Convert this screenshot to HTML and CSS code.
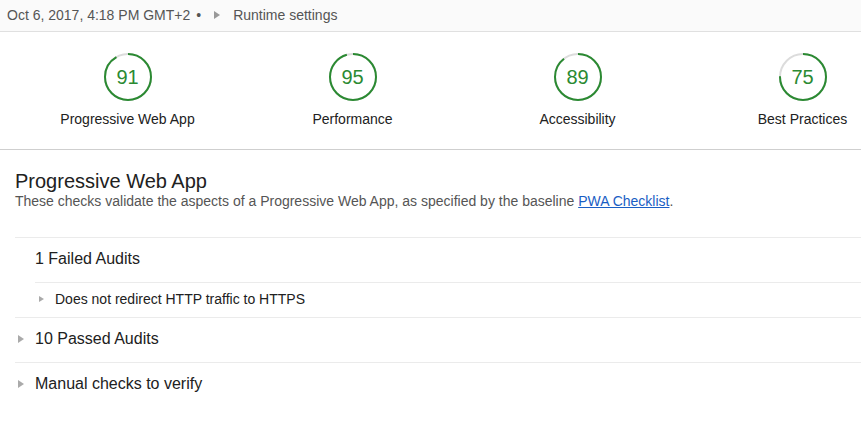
FILE: index.html
```html
<!DOCTYPE html>
<html>
<head>
<meta charset="utf-8">
<link rel="stylesheet" href="styles.css">
</head>
<body>
<div class="topbar">
  <span class="meta">Oct 6, 2017, 4:18 PM GMT+2</span>
  <span class="bullet">•</span>
  <span class="tri small"></span>
  <span class="runtime">Runtime settings</span>
</div>
<div class="scores">
  <div class="gauge">
    <div class="ring">
      <svg width="50" height="50" viewBox="0 0 50 50"><circle cx="25" cy="25" r="23" class="bg"/><circle cx="25" cy="25" r="23" class="fg" style="stroke-dasharray: 131.5 144.5"/></svg>
      <span class="num">91</span>
    </div>
    <div class="label">Progressive Web App</div>
  </div>
  <div class="gauge">
    <div class="ring">
      <svg width="50" height="50" viewBox="0 0 50 50"><circle cx="25" cy="25" r="23" class="bg"/><circle cx="25" cy="25" r="23" class="fg" style="stroke-dasharray: 137.3 144.5"/></svg>
      <span class="num">95</span>
    </div>
    <div class="label">Performance</div>
  </div>
  <div class="gauge">
    <div class="ring">
      <svg width="50" height="50" viewBox="0 0 50 50"><circle cx="25" cy="25" r="23" class="bg"/><circle cx="25" cy="25" r="23" class="fg" style="stroke-dasharray: 128.6 144.5"/></svg>
      <span class="num">89</span>
    </div>
    <div class="label">Accessibility</div>
  </div>
  <div class="gauge">
    <div class="ring">
      <svg width="50" height="50" viewBox="0 0 50 50"><circle cx="25" cy="25" r="23" class="bg"/><circle cx="25" cy="25" r="23" class="fg" style="stroke-dasharray: 108.4 144.5"/></svg>
      <span class="num">75</span>
    </div>
    <div class="label">Best Practices</div>
  </div>
</div>
<div class="section">
  <h2 class="title">Progressive Web App</h2>
  <p class="desc">These checks validate the aspects of a Progressive Web App, as specified by the baseline <a href="#">PWA Checklist</a>.</p>
  <div class="group">
    <div class="group-head">1 Failed Audits</div>
    <div class="audits">
      <div class="audit"><span class="tri"></span><span>Does not redirect HTTP traffic to HTTPS</span></div>
    </div>
  </div>
  <div class="group">
    <div class="group-head closed"><span class="tri"></span><span>10 Passed Audits</span></div>
  </div>
  <div class="group">
    <div class="group-head closed"><span class="tri"></span><span>Manual checks to verify</span></div>
  </div>
</div>
</body>
</html>
```
FILE: styles.css
```css
html, body {
  margin: 0;
  padding: 0;
  overflow: hidden;
  background: #fff;
}
body {
  font-family: "Liberation Sans", Arial, sans-serif;
  color: #212121;
}
.topbar {
  height: 32px;
  box-sizing: border-box;
  background: #fafafa;
  border-bottom: 1px solid #e0e0e0;
  display: flex;
  align-items: center;
  padding: 0 0 2px 7px;
  font-size: 14px;
  color: #555;
}
.bullet {
  margin-left: 6px;
}
.tri {
  display: inline-block;
  width: 0;
  height: 0;
  border-top: 4px solid transparent;
  border-bottom: 4px solid transparent;
  border-left: 6px solid #aaa;
  flex: none;
}
.topbar .tri {
  margin: 0 13px 0 13px;
  border-left-color: #999;
}
.scores {
  display: flex;
  box-sizing: border-box;
  height: 118px;
  padding: 20px 0 0 15px;
  border-bottom: 1px solid #cfcfcf;
}
.gauge {
  flex: 0 0 225px;
  display: flex;
  flex-direction: column;
  align-items: center;
}
.ring {
  position: relative;
  width: 50px;
  height: 50px;
}
.ring svg {
  display: block;
}
.ring circle {
  fill: none;
  stroke-width: 2;
}
.ring .bg {
  stroke: #dcdcdc;
}
.ring .fg {
  stroke: #2b8a32;
  transform: rotate(-90deg);
  transform-origin: 25px 25px;
}
.num {
  position: absolute;
  left: 0;
  right: 0;
  top: 0;
  line-height: 50px;
  text-align: center;
  font-size: 20px;
  color: #2b8a32;
}
.label {
  margin-top: 9px;
  font-size: 14px;
  color: #212121;
  white-space: nowrap;
}
.section {
  padding: 19px 0 0 15px;
}
.title {
  margin: 0;
  font-size: 20px;
  font-weight: normal;
  line-height: 24px;
  color: #212121;
}
.desc {
  margin: 0 0 28px;
  font-size: 14px;
  line-height: 16px;
  color: #555;
}
.desc a {
  color: #1a5ec4;
  text-decoration: underline;
}
.group {
  border-top: 1px solid #ebebeb;
}
.group-head {
  height: 44px;
  box-sizing: border-box;
  padding-bottom: 2px;
  display: flex;
  align-items: center;
  padding-left: 20px;
  font-size: 16px;
  color: #212121;
}
.group-head.closed {
  padding-left: 3px;
}
.group-head.closed .tri {
  margin-right: 11px;
}
.audits {
  margin-left: 20px;
}
.audit {
  height: 35px;
  box-sizing: border-box;
  padding-bottom: 3px;
  border-top: 1px solid #ebebeb;
  display: flex;
  align-items: center;
  font-size: 14px;
  color: #212121;
  padding-left: 4px;
}
.audit .tri {
  border-top-width: 3.5px;
  border-bottom-width: 3.5px;
  border-left-width: 5px;
  margin-right: 11px;
}
```
